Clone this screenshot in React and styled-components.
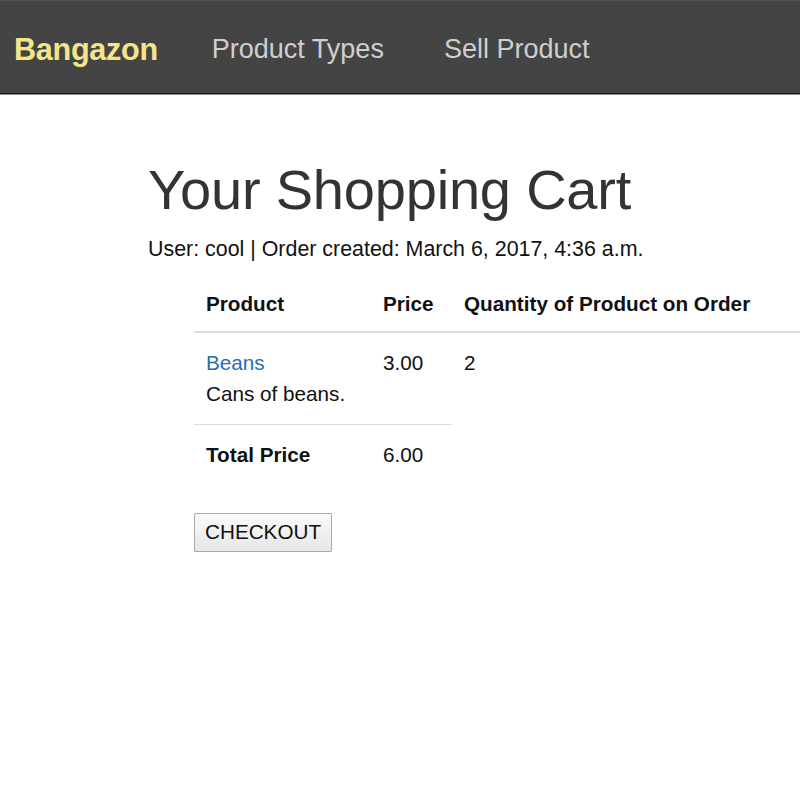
import React from "react";
import styled, { createGlobalStyle } from "styled-components";

const GlobalStyle = createGlobalStyle`
  html, body {
    margin: 0;
    padding: 0;
    overflow: hidden;
    background: #fff;
    font-family: "Liberation Sans", Arial, Helvetica, sans-serif;
    color: #333;
  }
`;

const Navbar = styled.nav`
  height: 92px;
  background: #444;
  border-top: 1px solid #555;
  border-bottom: 1px solid #1c1c1c;
  box-shadow: 0 1px 0 #8a8a8a;
  display: flex;
  align-items: center;
  padding-left: 14px;
  gap: 54px;
`;

const Brand = styled.a`
  font-size: 30.6px;
  font-weight: bold;
  color: #f5e58a;
  text-decoration: none;
  letter-spacing: -0.3px;
  margin-top: 4px;
`;

const NavLink = styled.a`
  font-size: 27px;
  color: #cfcfcf;
  text-decoration: none;
  margin-top: 4px;
  margin-left: ${(p) => p.$first ? "0" : "6px"};
`;

const Main = styled.main`
  padding: 65px 0 0 148px;
`;

const Title = styled.h1`
  margin: 0;
  font-size: 56px;
  font-weight: normal;
  line-height: 1.1;
  color: #333;
  letter-spacing: -0.2px;
`;

const Meta = styled.p`
  margin: 13px 0 0;
  font-size: 21.4px;
  line-height: 30px;
  color: #111;
`;

const CartBlock = styled.div`
  margin: 14px 0 0 46px;
`;

const Table = styled.table`
  border-collapse: collapse;
  table-layout: fixed;
  width: 762px;
  font-size: 20.7px;
  line-height: 31px;
  color: #111;
`;

const Th = styled.th`
  width: ${(p) => p.$w}px;
  text-align: left;
  padding: 10px 12px 12.5px;
  border-bottom: 2px solid #ddd;
  white-space: nowrap;
  vertical-align: bottom;
`;

const Td = styled.td`
  padding: 14px 12px 15px;
  vertical-align: top;
  white-space: nowrap;
  font-weight: ${(p) => p.$bold ? "bold" : "normal"};
  border-top: ${(p) => p.$line ? "1px solid #ddd" : "none"};
`;

const ProductLink = styled.a`
  color: #2a6db5;
  text-decoration: none;
  display: block;
`;

const Desc = styled.span`
  display: block;
`;

const CheckoutButton = styled.button`
  margin-top: 28px;
  font-family: "Liberation Sans", Arial, sans-serif;
  font-size: 20.7px;
  color: #111;
  padding: 6px 10px 7px;
  background: linear-gradient(#fafafa, #e6e6e6);
  border: 1px solid #a9a9a9;
  border-radius: 1px;
`;

export default function App() {
  return (
    <>
      <GlobalStyle />
      <Navbar>
        <Brand href="#">Bangazon</Brand>
        <NavLink $first href="#">Product Types</NavLink>
        <NavLink href="#">Sell Product</NavLink>
      </Navbar>
      <Main>
        <Title>Your Shopping Cart</Title>
        <Meta>User: cool | Order created: March 6, 2017, 4:36 a.m.</Meta>
        <CartBlock>
          <Table>
            <thead>
              <tr>
                <Th $w={153}>Product</Th>
                <Th $w={57}>Price</Th>
                <Th $w={312}>Quantity of Product on Order</Th>
                <Th $w={144}>Remove</Th>
              </tr>
            </thead>
            <tbody>
              <tr>
                <Td>
                  <ProductLink href="#">Beans</ProductLink>
                  <Desc>Cans of beans.</Desc>
                </Td>
                <Td>3.00</Td>
                <Td>2</Td>
                <Td>Remove</Td>
              </tr>
              <tr>
                <Td $bold $line>Total Price</Td>
                <Td $line>6.00</Td>
              </tr>
            </tbody>
          </Table>
          <CheckoutButton>CHECKOUT</CheckoutButton>
        </CartBlock>
      </Main>
    </>
  );
}
